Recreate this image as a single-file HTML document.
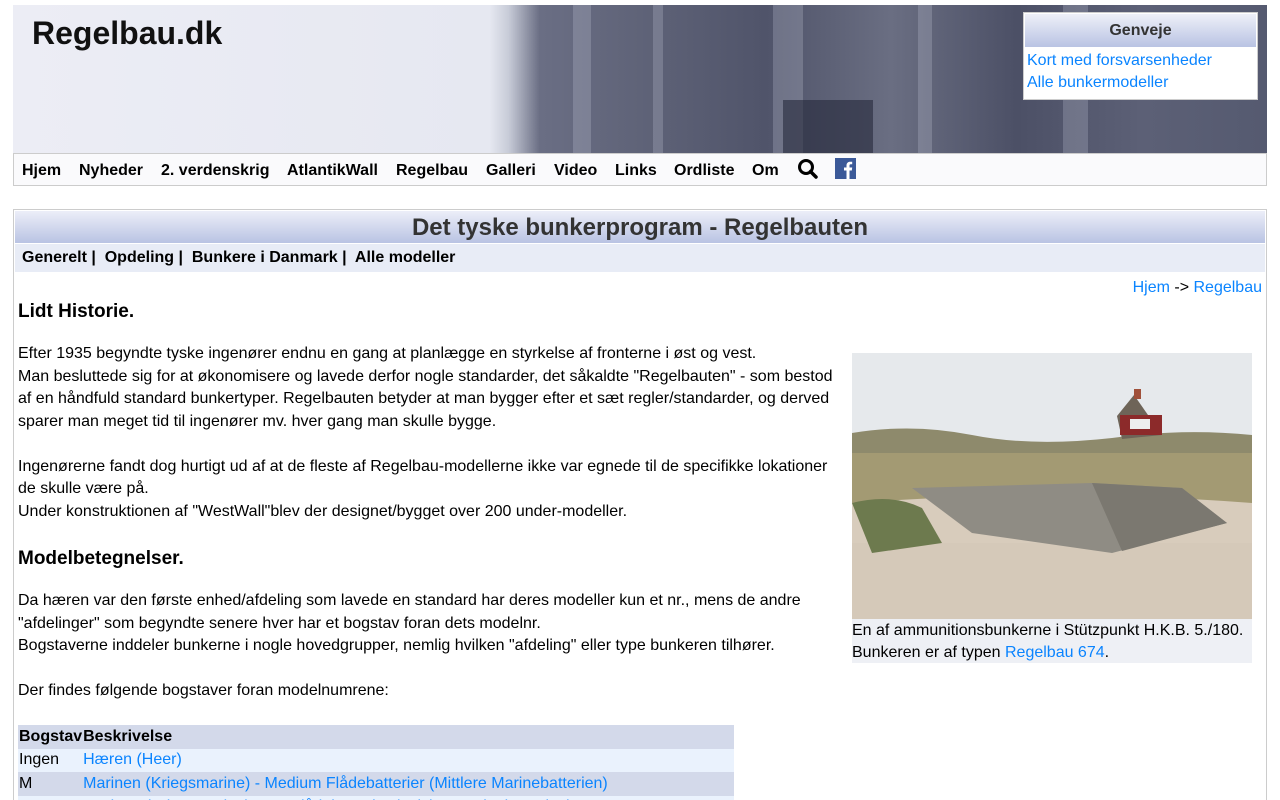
<!DOCTYPE html>
<html><head><meta charset="utf-8">
<style>
*{box-sizing:border-box}
html{height:800px;overflow:hidden}
body{margin:0;background:#fff;font-family:"Liberation Sans",sans-serif;font-size:16px;color:#000;width:1280px;height:800px;overflow:hidden;position:relative}
a{color:#0a84ff;text-decoration:none}
#hdr{position:absolute;left:13px;top:5px;width:1254px;height:148px;background:linear-gradient(90deg,#ecedf5 0%,#e6e8f1 38%,#c8ccd8 39.5%,#6a6e84 42%,#5f6378 50%,#50546a 60%,#6a6e82 70%,#4c5066 80%,#5c6076 90%,#555a70 100%);overflow:hidden}
#hdr .streak{position:absolute;top:0;height:148px;background:rgba(200,205,220,.25)}
#logo{position:absolute;left:32px;top:15px;font-size:32px;font-weight:bold;color:#111}
#gen{position:absolute;left:1023px;top:12px;width:235px;height:88px;background:#fff;border:1px solid #ccc}
#gen .h{height:33px;background:linear-gradient(#eef0f8,#b9c3e3);text-align:center;font-weight:bold;color:#333;line-height:34px;font-size:16px;margin:1px}
#gen a{display:block;padding-left:3px;line-height:22px;position:relative;top:2px}
#nav{position:absolute;left:13px;top:153px;width:1254px;height:33px;background:#fafafc;border:1px solid #ccc;font-weight:bold;font-size:16px}
#nav span{position:absolute;top:8px}
#main{position:absolute;left:13px;top:209px;width:1254px;height:620px;border:1px solid #ccc}
#title{position:absolute;left:1px;top:1px;width:1250px;height:32px;background:linear-gradient(#eceef8,#b9c3e3);text-align:center;font-size:24px;font-weight:bold;color:#333;line-height:33px}
#sub{position:absolute;left:1px;top:34px;width:1250px;height:28px;background:#e8ecf6;font-weight:bold;padding-left:7px;line-height:28px}
p,h3{margin:0}
.t{position:absolute;left:18px;line-height:22.5px}
h3{font-size:19px}
#fig{position:absolute;left:852px;top:353px;width:400px;height:310px;background:#eef0f5}
#cap{position:absolute;left:852px;top:620px;line-height:22px}
table{position:absolute;left:18px;top:725px;border-collapse:collapse;width:716px}
td{padding:0 1px 0 1px;height:23.5px;line-height:22px}
</style></head><body>
<div id="hdr">
<div class="streak" style="left:560px;width:18px"></div>
<div class="streak" style="left:640px;width:10px"></div>
<div class="streak" style="left:760px;width:30px"></div>
<div class="streak" style="left:905px;width:14px"></div>
<div class="streak" style="left:1050px;width:25px"></div>
<div style="position:absolute;left:770px;top:95px;width:90px;height:53px;background:#25283a;opacity:.6"></div>
</div>
<div id="logo">Regelbau.dk</div>
<div id="gen"><div class="h">Genveje</div><a>Kort med forsvarsenheder</a><a>Alle bunkermodeller</a></div>
<div id="nav">
<span style="left:8px">Hjem</span><span style="left:65px">Nyheder</span><span style="left:147px">2. verdenskrig</span><span style="left:273px">AtlantikWall</span><span style="left:382px">Regelbau</span><span style="left:472px">Galleri</span><span style="left:540px">Video</span><span style="left:601px">Links</span><span style="left:660px">Ordliste</span><span style="left:738px">Om</span>
<svg style="position:absolute;left:783px;top:4px" width="22" height="22" viewBox="0 0 22 22"><circle cx="9" cy="9" r="6.5" fill="none" stroke="#000" stroke-width="3"/><path d="M13.5 13.5L19 19" stroke="#000" stroke-width="3.5" stroke-linecap="round"/></svg>
<svg style="position:absolute;left:821px;top:4px" width="21" height="21" viewBox="0 0 21 21"><rect width="21" height="21" fill="#3b5998"/><path d="M11.5 21V12.5H9V9.5h2.5V7.5c0-2.5 1.5-3.8 3.7-3.8 1 0 1.8.1 2 .1v2.4h-1.4c-1.1 0-1.300.5-1.300 1.300v2h2.7l-.4 3h-2.300V21z" fill="#fff"/></svg>
</div>
<div id="main"><div id="title">Det tyske bunkerprogram - Regelbauten</div>
<div id="sub">Generelt |&nbsp; Opdeling |&nbsp; Bunkere i Danmark |&nbsp; Alle modeller</div></div>
<div style="position:absolute;right:18px;top:277px;line-height:22px"><a>Hjem</a> -&gt; <a>Regelbau</a></div>
<h3 class="t" style="top:301px">Lidt Historie.</h3>
<div class="t" style="top:343px;width:825px">Efter 1935 begyndte tyske ingenører endnu en gang at planlægge en styrkelse af fronterne i øst og vest.<br>Man besluttede sig for at økonomisere og lavede derfor nogle standarder, det såkaldte "Regelbauten" - som bestod af en håndfuld standard bunkertyper. Regelbauten betyder at man bygger efter et sæt regler/standarder, og derved sparer man meget tid til ingenører mv. hver gang man skulle bygge.<br><br>Ingenørerne fandt dog hurtigt ud af at de fleste af Regelbau-modellerne ikke var egnede til de specifikke lokationer de skulle være på.<br>Under konstruktionen af "WestWall"blev der designet/bygget over 200 under-modeller.</div>
<h3 class="t" style="top:548px">Modelbetegnelser.</h3>
<div class="t" style="top:590px;width:825px">Da hæren var den første enhed/afdeling som lavede en standard har deres modeller kun et nr., mens de andre "afdelinger" som begyndte senere hver har et bogstav foran dets modelnr.<br>Bogstaverne inddeler bunkerne i nogle hovedgrupper, nemlig hvilken "afdeling" eller type bunkeren tilhører.<br><br>Der findes følgende bogstaver foran modelnumrene:</div>
<div id="fig">
<svg width="400" height="266" viewBox="0 0 400 266" style="display:block">
<rect width="400" height="266" fill="#e6e9ec"/>
<path d="M0 80 Q60 70 120 82 T260 85 Q330 75 400 82 V266 H0Z" fill="#8e8a6c"/>
<rect x="0" y="100" width="400" height="70" fill="#a39a73"/>
<path d="M0 150 Q200 135 400 150 V266 H0Z" fill="#d8ccbc"/>
<rect x="0" y="190" width="400" height="76" fill="#d5c9b9"/>
<path d="M60 135 L240 130 L330 135 L375 170 L260 200 L120 180 Z" fill="#8f8c84"/>
<path d="M240 130 L330 135 L375 170 L270 198 Z" fill="#7b7870"/>
<path d="M265 63 L282 42 L310 82 L270 86Z" fill="#6e6458"/>
<rect x="268" y="62" width="42" height="20" fill="#8c2a2a"/>
<rect x="278" y="66" width="20" height="10" fill="#eee"/>
<rect x="282" y="36" width="7" height="10" fill="#a0503a"/>
<path d="M0 150 Q40 140 70 155 L90 190 L20 200 Z" fill="#6d7a4e"/>
</svg>
</div>
<div id="cap">En af ammunitionsbunkerne i Stützpunkt H.K.B. 5./180.<br>Bunkeren er af typen <a>Regelbau 674</a>.</div>
<table>
<tr style="background:#d3d9ea;font-weight:bold"><td style="width:64px">Bogstav</td><td style="padding-left:0">Beskrivelse</td></tr>
<tr style="background:#eaf2fd"><td>Ingen</td><td style="padding-left:0"><a>Hæren (Heer)</a></td></tr>
<tr style="background:#d3d9ea"><td>M</td><td style="padding-left:0"><a>Marinen (Kriegsmarine) - Medium Flådebatterier (Mittlere Marinebatterien)</a></td></tr>
<tr style="background:#eaf2fd"><td>L</td><td style="padding-left:0"><a>Marinen (Kriegsmarine) - Let Flådebatterier (Leichte Marinebatterien)</a></td></tr>
</table>
</body></html>
